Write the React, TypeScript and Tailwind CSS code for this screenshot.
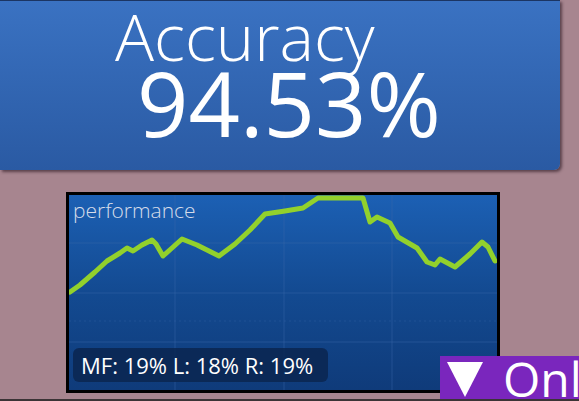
import React from "react"

const points: [number, number][] = [
  [70, 292], [80, 285], [95, 272], [107, 261], [120, 253], [127, 248], [133, 251],
  [142, 245], [152, 240], [156, 244], [163, 256], [172, 248], [182, 239], [197, 245],
  [219, 256], [235, 244], [250, 230], [265, 214], [285, 211], [303, 208], [312, 202],
  [318, 198], [363, 198], [370, 222], [377, 217], [390, 223], [398, 237], [417, 248],
  [427, 262], [435, 265], [440, 259], [455, 267], [470, 254], [482, 242], [488, 247],
  [495, 261],
]

function PerformanceChart() {
  const d = points.map((p, i) => `${i === 0 ? "M" : "L"}${p[0]} ${p[1]}`).join(" ")
  return (
    <div className="relative ml-[66px] mt-[22px] flex h-[201px] w-[434px] flex-col justify-between border-[3px] border-black bg-gradient-to-b from-[#1c60b4] via-[#134a91] to-[#0f3b7a] pb-[8px] pl-[4px] pt-[3px]">
      {/* grid + line, drawn in page coords */}
      <svg className="absolute inset-0 h-full w-full" viewBox="69 195 428 195" preserveAspectRatio="none">
        <g stroke="#3a68a8" strokeOpacity="0.45" strokeWidth="1">
          <line x1="175" y1="195" x2="175" y2="390" />
          <line x1="284" y1="195" x2="284" y2="390" />
          <line x1="392" y1="195" x2="392" y2="390" />
          <line x1="69" y1="243" x2="497" y2="243" />
          <line x1="69" y1="293" x2="497" y2="293" />
          <line x1="69" y1="342" x2="497" y2="342" />
        </g>
        <line x1="69" y1="321" x2="497" y2="321" stroke="#3a68a8" strokeOpacity="0.35" strokeDasharray="2 3" />
        <path d={d} fill="none" stroke="#92d12c" strokeWidth="5" strokeLinejoin="round" strokeLinecap="round" />
      </svg>
      <div className="relative font-['Open_Sans',sans-serif] text-[21px] font-light leading-[24px] text-[#d5dcea]">
        performance
      </div>
      <div className="relative flex h-[34px] w-[255px] items-center rounded-md bg-[#0b2650]/85 px-[8px] font-['Open_Sans',sans-serif] text-[22px] leading-none text-white">
        MF: 19% L: 18% R: 19%
      </div>
    </div>
  )
}

export default function App() {
  return (
    <div className="relative h-[401px] w-[579px] overflow-hidden border-b-2 border-[#3b3436] bg-[#a7858f]">
      <div className="h-[170px] w-[560px] rounded-br-md border-t border-[#1b3563] bg-gradient-to-b from-[#3a72c2] to-[#2a5aa3] shadow-[2px_2px_3px_rgba(40,20,30,0.6)]">
        <div className="flex flex-col pl-[115px] font-['Open_Sans',sans-serif] text-white">
          <div className="text-[65px] font-light leading-[70px]">Accuracy</div>
          <div className="-mt-[14px] pl-[22px] text-[90px] leading-[90px]">94.53%</div>
        </div>
      </div>
      <PerformanceChart />
      <div className="absolute left-[440px] top-[356px] flex h-[45px] w-[150px] items-center gap-[20px] bg-[#7a26bd] pl-[7px] font-['Open_Sans',sans-serif] text-white">
        <svg width="36" height="37" viewBox="0 0 36 37" className="shrink-0">
          <polygon points="0,2 36,2 18,37" fill="white" />
        </svg>
        <span className="text-[48px] leading-none">Onl</span>
      </div>
    </div>
  )
}
